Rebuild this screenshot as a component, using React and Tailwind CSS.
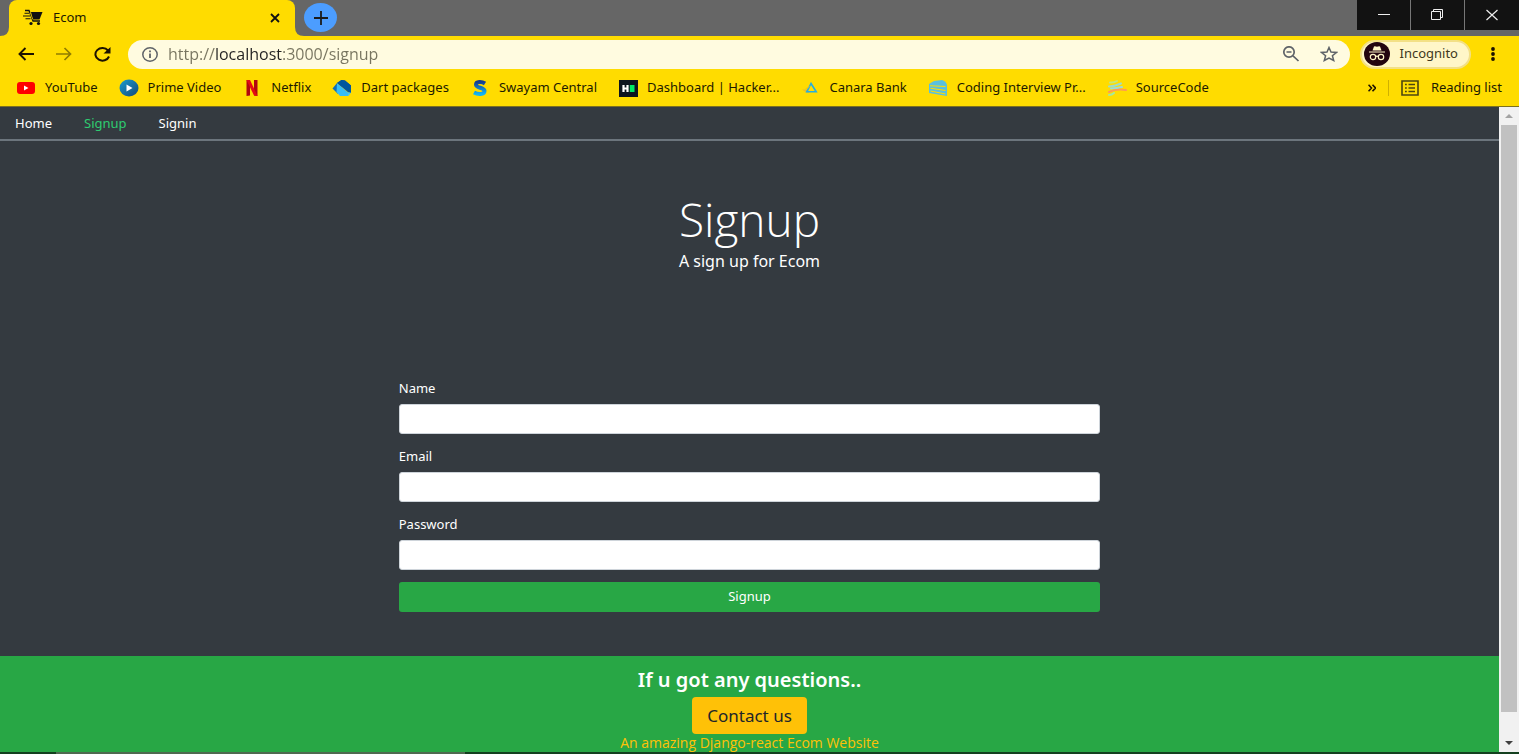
import React from "react";

function CartIcon() {
  return (
    <svg width="20" height="18" viewBox="0 0 20 18" aria-hidden="true">
      <path d="M8 3h11.500l-3 7.500H9.500z" fill="#111" />
      <path d="M2 1.500h4l4 10.500h7" fill="none" stroke="#111" strokeWidth="1.300" />
      <path d="M1.500 4.300h4.500M0 7h7M2.500 9.700h5" stroke="#111" strokeWidth="1.100" />
      <path d="M7.300 3.500 9.800 10.500" stroke="#ffdc00" strokeWidth=".8" />
      <circle cx="8" cy="14.500" r="1.600" fill="#111" />
      <circle cx="15.500" cy="14.500" r="1.600" fill="#111" />
    </svg>
  );
}

const YouTube = () => (
  <svg width="18" height="14" viewBox="0 0 18 14">
    <rect y="1" width="18" height="12" rx="3" fill="#f00" />
    <path d="M7 4.500v5l4.500-2.500z" fill="#fff" />
  </svg>
);
const Prime = () => (
  <svg width="20" height="18" viewBox="0 0 20 18">
    <defs>
      <linearGradient id="prime" x1="0" y1="0" x2="1" y2="1">
        <stop offset="0" stopColor="#1a9bd0" />
        <stop offset="1" stopColor="#134a78" />
      </linearGradient>
    </defs>
    <ellipse cx="10" cy="9" rx="9.500" ry="8.500" fill="url(#prime)" />
    <path d="M7.500 5.500v7l6-3.500z" fill="#fff" />
  </svg>
);
const Netflix = () => (
  <svg width="14" height="18" viewBox="0 0 14 18">
    <path d="M1.500 1h3.500v15.500l-3.500.5zM9 1h3.500v16l-3.500-.5z" fill="#b1060f" />
    <path d="M1.500 1H5l7.500 16L9 16.500z" fill="#e50914" />
  </svg>
);
const Dart = () => (
  <svg width="20" height="18" viewBox="0 0 20 18">
    <path d="M.5 9.500 5 4l1 11z" fill="#0f6fb8" />
    <path d="M5 4 9.500 1 13 1.500l6 5V14z" fill="#00569e" />
    <path d="M5 4 16.500 14v3H8L4.500 13z" fill="#35bdf8" />
    <path d="M5 4 9.500 1 13 1.500l6 5V14l-2.500-.5z" fill="#00569e" />
    <path d="M16 13.500h3l-2.500 3.500z" fill="#40c4ff" />
  </svg>
);
const Swayam = () => (
  <svg width="16" height="18" viewBox="0 0 16 18">
    <defs>
      <linearGradient id="swayam" x1="0" y1="0" x2="0" y2="1">
        <stop offset="0" stopColor="#153c8f" />
        <stop offset="1" stopColor="#12b5f5" />
      </linearGradient>
    </defs>
    <path d="M13 4.500C10 2.500 4 2 4 5.700c0 3.500 8.500 2.600 8.500 6.300 0 4-7 3.500-10.500 1.500" fill="none" stroke="url(#swayam)" strokeWidth="4" />
  </svg>
);
const Hacker = () => (
  <svg width="19" height="17" viewBox="0 0 19 17">
    <rect width="19" height="17" fill="#0c141f" />
    <path d="M4.500 5v7M8.500 5v7M4 8.500h5" stroke="#fff" strokeWidth="2.200" />
    <path d="M10.800 5h4.700v7h-4.700z" fill="#00ea64" />
  </svg>
);
const Canara = () => (
  <svg width="18" height="16" viewBox="0 0 18 16">
    <path d="M1 9.500h6l1.500 3.500H6z" fill="#e9bd2c" />
    <path d="M10 3.500 5.800 11.800h9.400z" fill="none" stroke="#27aee0" strokeWidth="1.600" />
    <path d="m4.500 9 4-2.500" stroke="#f3bd1c" strokeWidth="1" />
  </svg>
);
const Coding = () => (
  <svg width="20" height="18" viewBox="0 0 20 18">
    <path d="M1 5 6 2l8-1q4 1 5 5v11L1 14z" fill="#5bc0de" />
    <path d="M2 6.700 17.500 7.500M2.500 9.200 17.500 11.500M2.500 12 17.500 15" stroke="#ffdc00" strokeWidth="1.100" fill="none" />
  </svg>
);
const Source = () => (
  <svg width="20" height="18" viewBox="0 0 20 18" fill="none" strokeLinecap="round" strokeWidth="2">
    <path d="M3 3.500q4 .5 7-1.500" stroke="#c5e87b" />
    <path d="M2 7.500q6-.5 12-3" stroke="#9fdcc8" />
    <path d="M4 9.500q6 0 11-1.500" stroke="#9cdcd8" />
    <path d="M2 13q7-3.500 17-2" stroke="#ff9a55" />
    <path d="M2 16q3 0 5-2" stroke="#a5e8a0" />
  </svg>
);

const bookmarks = [
  ["YouTube", YouTube],
  ["Prime Video", Prime],
  ["Netflix", Netflix],
  ["Dart packages", Dart],
  ["Swayam Central", Swayam],
  ["Dashboard | Hacker...", Hacker],
  ["Canara Bank", Canara],
  ["Coding Interview Pr...", Coding],
  ["SourceCode", Source],
];

function TabStrip() {
  return (
    <header className="flex h-9 items-start bg-[#666666]">
      <div className="flex h-9 items-end self-end">
        <svg width="9" height="9" viewBox="0 0 9 9" aria-hidden="true">
          <path d="M9 0v9H0q9 0 9-9" fill="#ffdc00" />
        </svg>
        <div className="flex h-9 w-[286px] items-center rounded-t-lg bg-[#ffdc00] pr-3 pl-3.5">
          <CartIcon />
          <span className="flex-1 pl-2.5 text-[13px]">Ecom</span>
          <button aria-label="Close tab" className="grid size-4 place-items-center">
            <svg width="10" height="10" viewBox="0 0 10 10"><path d="m1 1 8 8M9 1 1 9" stroke="#111" strokeWidth="1.800" /></svg>
          </button>
        </div>
        <svg width="9" height="9" viewBox="0 0 9 9" aria-hidden="true">
          <path d="M0 0v9h9Q0 9 0 0" fill="#ffdc00" />
        </svg>
      </div>
      <button aria-label="New tab" className="mt-[3px] grid h-[29px] w-[33px] place-items-center rounded-[50%] bg-[#4c9dff]">
        <svg width="14" height="14" viewBox="0 0 14 14"><path d="M7 0v14M0 7h14" stroke="#1b1b1b" strokeWidth="1.800" /></svg>
      </button>
      <div className="ml-auto flex gap-px bg-[#777777]">
        <button aria-label="Minimize" className="grid h-[30px] w-[53px] place-items-center bg-[#121212]">
          <svg width="12" height="12" viewBox="0 0 12 12"><path d="M0 5.500h12" stroke="#eee" /></svg>
        </button>
        <button aria-label="Restore" className="grid h-[30px] w-[53px] place-items-center bg-[#121212]">
          <svg width="13" height="12" viewBox="0 0 13 12" fill="none" stroke="#eee"><path d="M.5 2.500h9v8h-9zM2.500 2.500v-2h9v8h-2" /></svg>
        </button>
        <button aria-label="Close window" className="grid h-[30px] w-[54px] place-items-center bg-[#121212]">
          <svg width="12" height="12" viewBox="0 0 12 12"><path d="m.5 1 11 10M11.500 1 .5 11" stroke="#eee" strokeWidth="1.200" /></svg>
        </button>
      </div>
    </header>
  );
}

function Toolbar() {
  return (
    <div className="flex h-9 items-center pr-6 pl-[18px]">
      <div className="flex w-[110px] gap-[22px]">
        <button aria-label="Back">
          <svg width="16" height="14" viewBox="0 0 16 14" fill="none" stroke="#1c1200" strokeWidth="1.900"><path d="M16 7H1.500M7.500 1 1.500 7l6 6" /></svg>
        </button>
        <button aria-label="Forward">
          <svg width="16" height="14" viewBox="0 0 16 14" fill="none" stroke="#907c00" strokeWidth="1.700"><path d="M0 7h14.500M8.500 1l6 6-6 6" /></svg>
        </button>
        <button aria-label="Reload">
          <svg width="17" height="15" viewBox="0 0 17 15"><path d="M14 3.500A7 6.300 0 1 0 15 9.500" fill="none" stroke="#1c1200" strokeWidth="2" /><path d="M16.500 0v6.500H9.500z" fill="#1c1200" /></svg>
        </button>
      </div>
      <div className="flex h-[29px] flex-1 items-center rounded-full bg-[#fffbe0] pr-3 pl-3.5">
        <svg width="16" height="15" viewBox="0 0 16 15" fill="none" stroke="#5f6368" strokeWidth="1.500"><ellipse cx="8" cy="7.500" rx="7.200" ry="6.700" /><path d="M8 6.500v4.500M8 3.500v1.700" strokeWidth="1.800" /></svg>
        <input
          aria-label="Address"
          defaultValue="http://localhost:3000/signup"
          className="ml-2.5 flex-1 bg-[linear-gradient(90deg,#77745f_0_47px,#222_47px_115px,#77745f_115px)] bg-clip-text font-['Open_Sans','Noto_Sans',sans-serif] text-base text-transparent outline-none"
        />
        <button aria-label="Zoom" className="mr-5">
          <svg width="18" height="16" viewBox="0 0 18 16" fill="none" stroke="#5f6368" strokeWidth="1.700"><circle cx="7" cy="6" r="5.200" /><path d="m11 9.800 5.500 5.200M4.500 6h5" /></svg>
        </button>
        <button aria-label="Bookmark this page">
          <svg width="18" height="16" viewBox="0 0 18 16" fill="none" stroke="#5f6368" strokeWidth="1.500"><path d="m9 1.500 2 4.500 5.500.4-4.100 3.300 1.300 4.800L9 12l-4.700 2.500 1.300-4.800L1.500 6.400 7 6z" /></svg>
        </button>
      </div>
      <button className="ml-2.5 flex h-[29px] items-center gap-2.5 rounded-full border-2 border-[#f3e086] bg-[#fff6c8] pr-[11px] pl-0.5 text-[13px] text-[#40381c]">
        <svg width="26" height="24" viewBox="0 0 26 24">
          <ellipse cx="13" cy="12" rx="13" ry="12" fill="#23040f" />
          <path d="M8.500 8.500 10 4.500q1-.5 3 .3 2-.8 3-.3l1.500 4zM5 9.500h16v1H5z" fill="#fff6c8" />
          <g fill="none" stroke="#fff6c8" strokeWidth="1.200"><circle cx="9" cy="15" r="2.700" /><circle cx="17" cy="15" r="2.700" /><path d="M11.700 14.500q1.300-.8 2.600 0" /></g>
        </svg>
        Incognito
      </button>
      <button aria-label="Menu" className="ml-5">
        <svg width="4" height="14" viewBox="0 0 4 14" fill="#1c1200"><circle cx="2" cy="2" r="1.900" /><circle cx="2" cy="7" r="1.900" /><circle cx="2" cy="12" r="1.900" /></svg>
      </button>
    </div>
  );
}

function Bookmarks() {
  return (
    <nav aria-label="Bookmarks" className="flex h-[35px] items-center border-b border-[#7c7020] pr-[17px] pb-0.5 pl-4 text-[13px] whitespace-nowrap">
      <div className="flex gap-[21px]">
        {bookmarks.map(([name, Icon]) => (
          <a key={name} href="#" className="flex items-center gap-[9px]">
            <span className="grid w-5 place-items-center"><Icon /></span>
            {name}
          </a>
        ))}
      </div>
      <button aria-label="More bookmarks" className="ml-auto">
        <svg width="8" height="8" viewBox="0 0 8 8" fill="none" stroke="#1c1200" strokeWidth="1.600"><path d="m.5.7 3 3.300-3 3.300M4.500.7l3 3.300-3 3.300" /></svg>
      </button>
      <span className="mx-3 h-4 w-px bg-[#d0b000]" />
      <button className="flex items-center gap-3">
        <svg width="18" height="16" viewBox="0 0 18 16" fill="none" stroke="#4d4510" strokeWidth="1.600"><path d="M1 1h16v14H1z" /><path d="M4 4.500h1.800M4 8h1.800M4 11.500h1.800M7.500 4.500H14M7.500 8H14M7.500 11.500H14" /></svg>
        Reading list
      </button>
    </nav>
  );
}

function Field({ id, label, type }) {
  return (
    <div className="mb-3">
      <label htmlFor={id} className="mb-1.5 block text-[13px] leading-5">{label}</label>
      <input id={id} type={type} className="block h-[30px] w-full rounded-[3px] border border-[#ced4da] bg-white px-3 text-sm text-[#495057]" />
    </div>
  );
}

function Page() {
  return (
    <div className="flex min-w-0 flex-1 flex-col overflow-hidden bg-[#343a40] text-white">
      <nav aria-label="Main" className="flex h-[34px] items-center gap-8 border-b-2 border-[#6c757d] px-[15px] pt-0.5 text-[13px]">
        <a href="#">Home</a>
        <a href="#" aria-current="page" className="text-[#2ecc71]">Signup</a>
        <a href="#">Signin</a>
      </nav>
      <main className="flex-1">
        <header className="pt-[50px] text-center">
          <h1 className="font-['Open_Sans','Noto_Sans',sans-serif] text-[46px] leading-[56px] font-light">Signup</h1>
          <p className="mt-0.5 text-base leading-6">A sign up for Ecom</p>
        </header>
        <form className="mx-auto mt-[105px] w-1/2 px-6">
          <Field id="name" label="Name" type="text" />
          <Field id="email" label="Email" type="email" />
          <Field id="password" label="Password" type="password" />
          <button type="button" className="block h-[30px] w-full rounded-[3px] bg-[#28a745] text-[13px]">Signup</button>
        </form>
      </main>
      <footer className="flex flex-col items-center bg-[#28a745] pt-3">
        <h2 className="text-xl leading-6 font-semibold">If u got any questions..</h2>
        <button className="mt-[5px] h-[37px] rounded bg-[#ffc107] px-[15px] text-[17px] text-[#212529]">Contact us</button>
        <p className="font-['Open_Sans','Noto_Sans',sans-serif] text-sm leading-[18px] text-[#ffc107]">An amazing Django-react Ecom Website</p>
      </footer>
    </div>
  );
}

function Scrollbar() {
  return (
    <div aria-hidden="true" className="flex w-5 flex-col items-center bg-[#f1f1f1] pt-1.5 pb-1.5">
      <svg width="8" height="6" viewBox="0 0 8 6"><path d="M0 5 4 1l4 4z" fill="#a3a3a3" /></svg>
      <div className="mt-1.5 mb-7 w-4 flex-1 bg-[#c1c1c1]" />
      <svg width="8" height="6" viewBox="0 0 8 6"><path d="m0 1 4 4 4-4z" fill="#404040" /></svg>
    </div>
  );
}

export default function App() {
  return (
    <div className="flex h-screen flex-col overflow-hidden bg-[#ffdc00] font-['Noto_Sans','Open_Sans',sans-serif] text-[#1c1a00]">
      <TabStrip />
      <Toolbar />
      <Bookmarks />
      <div className="flex min-h-0 flex-1">
        <Page />
        <Scrollbar />
      </div>
      <div aria-hidden="true" className="flex h-0.5 bg-[#14401f]">
        <span className="ml-14 w-[409px] bg-[#4f6a50]" />
      </div>
    </div>
  );
}
